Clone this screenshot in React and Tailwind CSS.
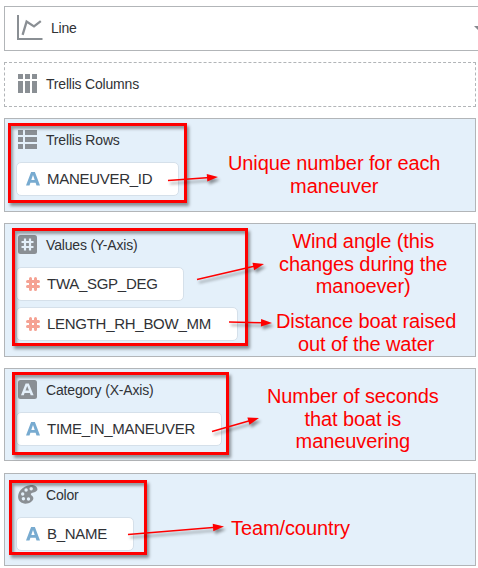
import React from "react";

const GREY = "#8a8f94";

function LineIcon() {
  return (
    <svg className="shrink-0" width="26" height="26" viewBox="0 0 26 26" fill="none" stroke={GREY}>
      <path d="M1 0V24H25.5" strokeWidth="2" />
      <path d="M5.6 19.8L9.6 6.6L17 11.4L23.8 6.2" strokeWidth="2.3" />
    </svg>
  );
}

function ColumnsIcon() {
  return (
    <svg width="19" height="19" viewBox="0 0 19 19" fill={GREY}>
      {[0, 7, 14].map((x) => (
        <g key={x}>
          <rect x={x} y="0" width="5" height="5" />
          <rect x={x} y="7" width="5" height="12" />
        </g>
      ))}
    </svg>
  );
}

function RowsIcon() {
  return (
    <svg width="19" height="19" viewBox="0 0 19 19" fill={GREY}>
      {[0, 7, 14].map((y) => (
        <g key={y}>
          <rect x="0" y={y} width="5" height="5" />
          <rect x="7" y={y} width="12" height="5" />
        </g>
      ))}
    </svg>
  );
}

function HashBoxIcon() {
  return (
    <svg width="19" height="19" viewBox="0 0 19 19">
      <rect width="19" height="19" rx="2.5" fill={GREY} />
      <path d="M7 3.5V15.5M12 3.5V15.5M3.5 7H15.5M3.5 12H15.5" stroke="#e4f0fa" strokeWidth="2.2" />
    </svg>
  );
}

function LetterBoxIcon() {
  return (
    <svg width="19" height="19" viewBox="0 0 19 19">
      <rect width="19" height="19" rx="2.5" fill={GREY} />
      <path d="M3 15.2L7.6 3.4H10.8L15.6 15.2H12.7L11.9 12.9H6.6L5.8 15.2ZM7.5 10.5H11L9.2 5.9Z" fill="#e4f0fa" fillRule="evenodd" />
    </svg>
  );
}

function PaletteIcon() {
  return (
    <svg width="20" height="19" viewBox="0 0 20 19">
      <path
        d="M12 0.2C15.5 -0.3 19 1.2 19.4 4C19.7 6.4 17 7.2 14.6 7.8C12.2 8.5 12.5 9.7 14 10.8C16.2 12.5 15.6 15.3 13 17C9.8 19.2 4.8 19.3 2 16.6C-1 13.5-.2 8.6 2.6 5C5 2.1 8.2.7 12 .2Z"
        fill={GREY}
      />
      <g fill="#e4f0fa">
        <circle cx="13.2" cy="3.8" r="1.7" />
        <circle cx="8.1" cy="5" r="1.7" />
        <circle cx="4.7" cy="9" r="1.7" />
        <circle cx="5.4" cy="13.8" r="1.7" />
        <circle cx="10.5" cy="14" r="1.7" />
      </g>
    </svg>
  );
}

function AttributeIcon() {
  return (
    <svg width="14" height="14" viewBox="0 0 14 14">
      <path d="M0 13.5L5.1 0H8.9L14 13.5H10.5L9.6 10.8H4.4L3.5 13.5ZM5.3 8.1H8.7L7 3.1Z" fill="#78abd0" fillRule="evenodd" />
    </svg>
  );
}

function MeasureIcon() {
  return (
    <svg width="14" height="14" viewBox="0 0 14 14">
      <path d="M4.5 1.5V12.5M9.5 1.5V12.5M1.5 4.5H12.5M1.5 9.5H12.5" stroke="#f5a293" strokeWidth="3" strokeLinecap="round" />
    </svg>
  );
}

function Chip({ icon, width, children }) {
  return (
    <div className={`flex h-[34px] items-center rounded-[5px] border border-[#d5e0ea] bg-white pl-[9px] ${width}`}>
      {icon}
      <span className="ml-[7px] text-[15px] leading-[18px] tracking-[-0.28px] whitespace-nowrap">{children}</span>
    </div>
  );
}

function Panel({ icon, title, height, children }) {
  return (
    <section className={`w-[472px] border border-[#b2b5b8] bg-[#e4f0fa] pt-[11px] pl-[11px] ${height}`}>
      <div className="flex h-[20px] items-start pl-[2px]">
        <div className="w-[28px]">{icon}</div>
        <h2 className="text-[14px] leading-5 tracking-[-0.17px]">{title}</h2>
      </div>
      <div className="mt-[12px] flex flex-col gap-[6px]">{children}</div>
    </section>
  );
}

function Frame({ place }) {
  return <div className={`absolute border-[3px] border-[#fe0000] shadow-[2px_3px_3px_rgba(0,0,0,0.4),inset_2px_3px_3px_rgba(0,0,0,0.35)] ${place}`} />;
}

function Note({ place, lines }) {
  return (
    <div className={`absolute text-center text-[20px] leading-[22.7px] tracking-[-0.1px] whitespace-nowrap text-[#fe0000] ${place}`}>
      {lines.map((line) => (
        <div key={line}>{line}</div>
      ))}
    </div>
  );
}

const arrows = [
  [168, 180.5, 218, 177],
  [197, 279.5, 264, 264],
  [229, 322, 272, 323],
  [212, 431.5, 259, 418],
  [128, 534.5, 224, 526.5],
];

function Arrow({ points }) {
  const [x1, y1, x2, y2] = points;
  const angle = (Math.atan2(y2 - y1, x2 - x1) * 180) / Math.PI;
  const length = Math.hypot(x2 - x1, y2 - y1);
  return (
    <g transform={`translate(${x1} ${y1}) rotate(${angle})`} fill="#fe0000">
      <rect y="-0.75" width={length - 8} height="1.5" />
      <path d={`M${length} 0L${length - 11} -3.8V3.8Z`} />
    </g>
  );
}

export default function App() {
  return (
    <main className="relative h-[568px] w-[478px] overflow-hidden bg-white font-['Liberation_Sans',Arial,sans-serif] text-[#303236]">
      <div className="flex flex-col gap-[11px] pt-[6px] pl-[4px]">
        <div className="flex h-[45px] w-[490px] items-center border border-[#b2b5b8] pb-px pl-[12px]">
          <LineIcon />
          <span className="ml-[8px] w-[25px] text-[14px] leading-5 tracking-[-0.2px]">Line</span>
          <svg className="ml-[398px] shrink-0" width="10" height="5" viewBox="0 0 10 5">
            <path d="M0 0H10L5 5Z" fill="#858a8f" />
          </svg>
        </div>
        <div className="flex h-[45px] w-[472px] items-center border border-dashed border-[#b2b5b8] pl-[13px]">
          <div className="w-[28px] pb-[2px]"><ColumnsIcon /></div>
          <span className="pb-px text-[14px] leading-5 tracking-[-0.2px]">Trellis Columns</span>
        </div>
        <Panel icon={<RowsIcon />} title="Trellis Rows" height="h-[94px]">
          <Chip icon={<AttributeIcon />} width="w-[163px]">MANEUVER_ID</Chip>
        </Panel>
        <Panel icon={<HashBoxIcon />} title="Values (Y-Axis)" height="h-[134px]">
          <Chip icon={<MeasureIcon />} width="w-[168px]">TWA_SGP_DEG</Chip>
          <Chip icon={<MeasureIcon />} width="w-[222px]">LENGTH_RH_BOW_MM</Chip>
        </Panel>
        <Panel icon={<LetterBoxIcon />} title="Category (X-Axis)" height="h-[93px]">
          <Chip icon={<AttributeIcon />} width="w-[206px]">TIME_IN_MANEUVER</Chip>
        </Panel>
        <Panel icon={<PaletteIcon />} title="Color" height="mt-px h-[93px]">
          <Chip icon={<AttributeIcon />} width="w-[118px]">B_NAME</Chip>
        </Panel>
      </div>

      <Frame place="left-[8px] top-[123px] h-[80px] w-[179px]" />
      <Frame place="left-[12px] top-[228px] h-[118px] w-[236px]" />
      <Frame place="left-[12px] top-[372px] h-[83px] w-[217px]" />
      <Frame place="left-[9px] top-[480px] h-[75px] w-[138px]" />

      <svg
        className="absolute inset-0 drop-shadow-[2px_3px_1.5px_rgba(0,0,0,0.4)]"
        width="478"
        height="568"
      >
        {arrows.map((points) => (
          <Arrow key={points[1]} points={points} />
        ))}
      </svg>

      <Note place="left-[228px] top-[152px]" lines={["Unique number for each", "maneuver"]} />
      <Note place="left-[279px] top-[230px]" lines={["Wind angle (this", "changes during the", "manoever)"]} />
      <Note place="left-[276px] top-[310px]" lines={["Distance boat raised", "out of the water"]} />
      <Note place="left-[267px] top-[385px]" lines={["Number of seconds", "that boat is", "maneuvering"]} />
      <Note place="left-[231px] top-[517px]" lines={["Team/country"]} />
    </main>
  );
}
